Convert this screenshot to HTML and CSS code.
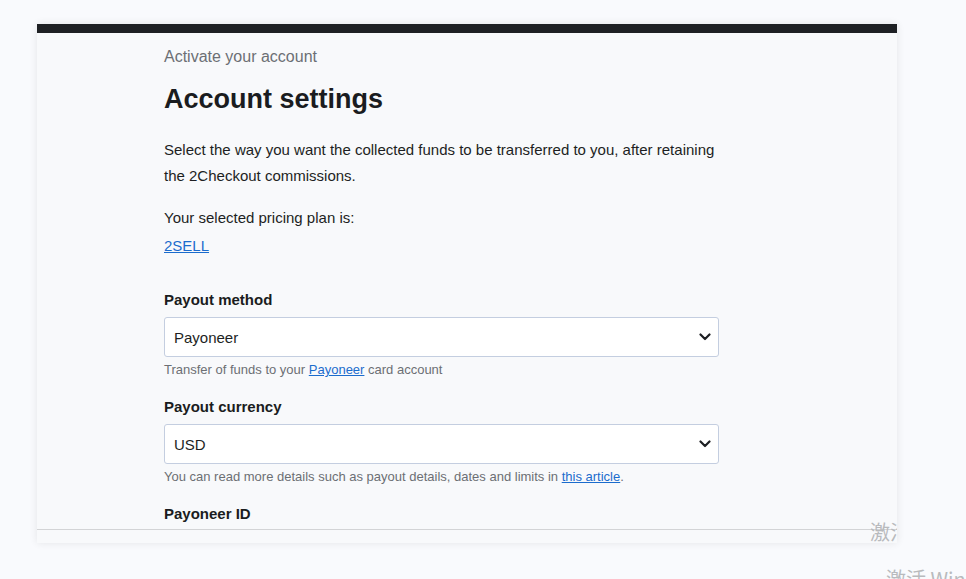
FILE: index.html
```html
<!DOCTYPE html>
<html>
<head>
<meta charset="utf-8">
<link rel="stylesheet" href="styles.css">
</head>
<body>
<div class="page">
  <div class="card">
    <div class="topbar"></div>
    <div class="body">
      <div class="content">
        <div class="eyebrow">Activate your account</div>
        <h1 class="title">Account settings</h1>
        <p class="intro">Select the way you want the collected funds to be transferred to you, after retaining the 2Checkout commissions.</p>
        <div class="plan">
          <div>Your selected pricing plan is:</div>
          <div><a class="link" href="#">2SELL</a></div>
        </div>
        <div class="field field-first">
          <div class="label">Payout method</div>
          <div class="select"><span>Payoneer</span><svg class="chev" width="12" height="8" viewBox="0 0 12 8"><path d="M1.5 1.5 L6 6 L10.5 1.5" fill="none" stroke="#1d1f23" stroke-width="2.2" stroke-linecap="round" stroke-linejoin="round"/></svg></div>
          <div class="help">Transfer of funds to your <a class="link" href="#">Payoneer</a> card account</div>
        </div>
        <div class="field">
          <div class="label">Payout currency</div>
          <div class="select"><span>USD</span><svg class="chev" width="12" height="8" viewBox="0 0 12 8"><path d="M1.5 1.5 L6 6 L10.5 1.5" fill="none" stroke="#1d1f23" stroke-width="2.2" stroke-linecap="round" stroke-linejoin="round"/></svg></div>
          <div class="help">You can read more details such as payout details, dates and limits in <a class="link" href="#">this article</a>.</div>
        </div>
        <div class="field">
          <div class="label">Payoneer ID</div>
        </div>
      </div>
    </div>
    <div class="footer"></div>
    <div class="wm wm-card">激活 Windows</div>
  </div>
  <div class="wm wm-page">激活 Windows</div>
</div>
</body>
</html>
```
FILE: styles.css
```css
* { box-sizing: border-box; }
html, body { margin: 0; padding: 0; }
body {
  background: #f9fafd;
  font-family: "Liberation Sans", Arial, "Noto Sans CJK SC", sans-serif;
  color: #1d1f23;
  width: 966px;
  height: 579px;
  overflow: hidden;
}
.page {
  position: relative;
  width: 966px;
  height: 579px;
  padding: 24px 0 0 37px;
}
.card {
  position: relative;
  width: 860px;
  height: 519px;
  background: #f8f9fb;
  box-shadow: 0 0 8px rgba(0, 0, 0, 0.09);
  display: flex;
  flex-direction: column;
  overflow: hidden;
}
.topbar {
  height: 9px;
  background: #1e2024;
  flex: none;
}
.body {
  flex: 1;
  overflow: hidden;
  padding: 14px 0 0 127px;
}
.content { width: 555px; }
.eyebrow {
  font-size: 16px;
  line-height: 20px;
  color: #6c6f74;
}
.title {
  margin: 16px 0 0;
  font-size: 27px;
  line-height: 32px;
  font-weight: 700;
  color: #1a1c20;
}
.intro {
  margin: 22px 0 0;
  font-size: 15px;
  line-height: 26px;
}
.plan {
  margin-top: 15px;
  font-size: 15px;
  line-height: 28px;
}
.link { color: #1b6ccd; text-decoration: underline; }
.field { margin-top: 18px; }
.field-first { margin-top: 30px; }
.label {
  font-size: 15px;
  line-height: 20px;
  font-weight: 700;
  color: #1a1c20;
}
.select {
  margin-top: 7px;
  height: 40px;
  background: #ffffff;
  border: 1px solid #c4cee0;
  border-radius: 3px;
  display: flex;
  align-items: center;
  justify-content: space-between;
  padding: 0 7px 0 9px;
  font-size: 15px;
  color: #1d1f23;
}
.chev { display: block; }
.help {
  margin-top: 4px;
  font-size: 13px;
  line-height: 18px;
  color: #6c6f74;
}
.footer {
  flex: none;
  height: 14px;
  border-top: 1px solid #d3d4d6;
  background: #f8f9fb;
}
.wm {
  position: absolute;
  font-family: "Noto Sans CJK SC", sans-serif;
  font-size: 20px;
  line-height: 24px;
  color: #b8babd;
  white-space: nowrap;
}
.wm-card { left: 833px; top: 496px; }
.wm-page { left: 886px; top: 567px; }
```
